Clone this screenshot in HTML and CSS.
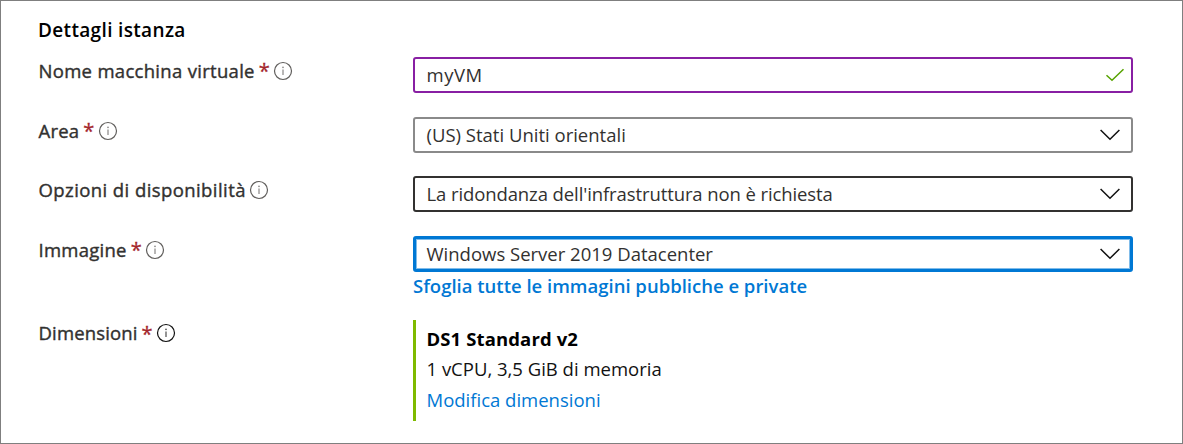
FILE: index.html
```
<!DOCTYPE html>
<html lang="it">
<head>
<meta charset="utf-8">
<title>Dettagli istanza</title>
<link rel="stylesheet" href="styles.css">
</head>
<body>
<svg class="defs" width="0" height="0">
  <symbol id="info" viewBox="0 0 20 20"><circle cx="10" cy="10" r="8.5" fill="none" stroke="currentColor" stroke-width="1.2"/><path class="stem" d="M10 8.4V14" fill="none" stroke="currentColor" stroke-width="1.2"/><circle class="dot" cx="10" cy="6.3" r=".85" fill="currentColor"/></symbol>
  <symbol id="chevron" viewBox="0 0 20 12"><path d="M.6 1 10 10.300 19.400 1" fill="none" stroke="currentColor" stroke-width="1.500"/></symbol>
  <symbol id="check" viewBox="0 0 20 14"><path d="M1.500 7.300 7 12.300 18.500 1.300" fill="none" stroke="currentColor" stroke-width="1.500"/></symbol>
</svg>
<main class="panel">
  <h2 class="title"><span class="t-title">Dettagli istanza</span></h2>
  <div class="row">
    <label class="label"><span class="t-name">Nome macchina virtuale</span><b class="req">*</b><svg class="info"><use href="#info"/></svg></label>
    <div class="field valid"><span class="t-myvm">myVM</span><svg class="check"><use href="#check"/></svg></div>
  </div>
  <div class="row">
    <label class="label"><span class="t-area">Area</span><b class="req">*</b><svg class="info"><use href="#info"/></svg></label>
    <div class="field muted"><span class="t-region">(US) Stati Uniti orientali</span><svg class="chevron"><use href="#chevron"/></svg></div>
  </div>
  <div class="row short">
    <label class="label"><span class="t-avail">Opzioni di disponibilità</span><svg class="info"><use href="#info"/></svg></label>
    <div class="field"><span class="t-redundancy">La ridondanza dell'infrastruttura non è richiesta</span><svg class="chevron"><use href="#chevron"/></svg></div>
  </div>
  <div class="row image">
    <label class="label"><span class="t-image">Immagine</span><b class="req">*</b><svg class="info"><use href="#info"/></svg></label>
    <div>
      <div class="field focus"><span class="t-windows">Windows Server 2019 Datacenter</span><svg class="chevron"><use href="#chevron"/></svg></div>
      <a class="browse"><span class="t-browse">Sfoglia tutte le immagini pubbliche e private</span></a>
    </div>
  </div>
  <div class="row size">
    <label class="label"><span class="t-size">Dimensioni</span><b class="req">*</b><svg class="info dark"><use href="#info"/></svg></label>
    <div class="summary">
      <strong><span class="t-ds1">DS1 Standard v2</span></strong>
      <div class="spec"><span class="t-spec">1 vCPU, 3,5 GiB di memoria</span></div>
      <a><span class="t-change">Modifica dimensioni</span></a>
    </div>
  </div>
</main>
</body>
</html>
```
FILE: styles.css
```
* { box-sizing: border-box; }
body { margin: 0; background: #fff; font-family: "Open Sans", "Noto Sans", sans-serif; font-size: 18.5px; color: #323130; }
.defs { display: block; }
.panel { height: 444px; border: 1px solid #7f7f7f; padding: 16px 49px 0 37px; overflow: hidden; }
.title { margin: 0; height: 40px; line-height: 26px; font-size: 19px; font-weight: 600; color: #000; }
.row { display: grid; grid-template-columns: 375px 720px; height: 60px; white-space: nowrap; align-items: start; }
.row:nth-of-type(2) { height: 59px; }
.row.image { height: 84px; }
.label { display: flex; align-items: center; height: 28px; }
.label span { -webkit-text-stroke: .4px #323130; padding-left: .5px; padding-bottom: 2px; }
.req { color: #a4262c; font-size: 20px; font-weight: 400; -webkit-text-stroke: .3px #a4262c; margin-left: 4px; width: 10px; padding-bottom: 1px; }
.info { width: 20px; height: 20px; margin-left: 4.500px; margin-top: -1px; color: #605e5c; }
.t-avail + .info { margin-left: 3.500px; }
.stem, .dot { opacity: .75; }
.info.dark { color: #111; }
.field { display: flex; align-items: center; justify-content: space-between; height: 36px; border: 2px solid #323130; border-radius: 3px; padding: 0 11px; }
.field span { padding-left: .5px; padding-bottom: 2px; }
.field.valid { border-color: #881fa3; padding-right: 6px; }
.field.muted { border-color: #8a8a8a; }
.field.focus { border: 3px solid #0078d4; padding: 0 10px; box-shadow: inset 0 0 0 1px #80bcea; }
.chevron { width: 20px; height: 12px; color: #111; }
.check { width: 20px; height: 14px; color: #57a300; }
a { color: #0078d4; display: block; }
.browse { line-height: 28px; font-weight: 600; }
.size .label { height: 27px; }
.summary { border-left: 3px solid #7fba00; height: 101px; padding: 4px 0 0 10.500px; line-height: 30.500px; color: #111; }
.summary strong { display: block; color: #000; font-weight: 700; }
.summary .spec { line-height: 28px; margin-bottom: 2.500px; }
.t-title { letter-spacing: .34px; }
.t-name { letter-spacing: .3px; }
.t-area { letter-spacing: .2px; }
.t-avail { letter-spacing: .42px; }
.t-image { letter-spacing: .25px; }
.t-size { letter-spacing: .15px; }
.t-myvm { letter-spacing: .5px; }
.t-redundancy { letter-spacing: -.1px; }
.t-ds1 { letter-spacing: .12px; }
```
